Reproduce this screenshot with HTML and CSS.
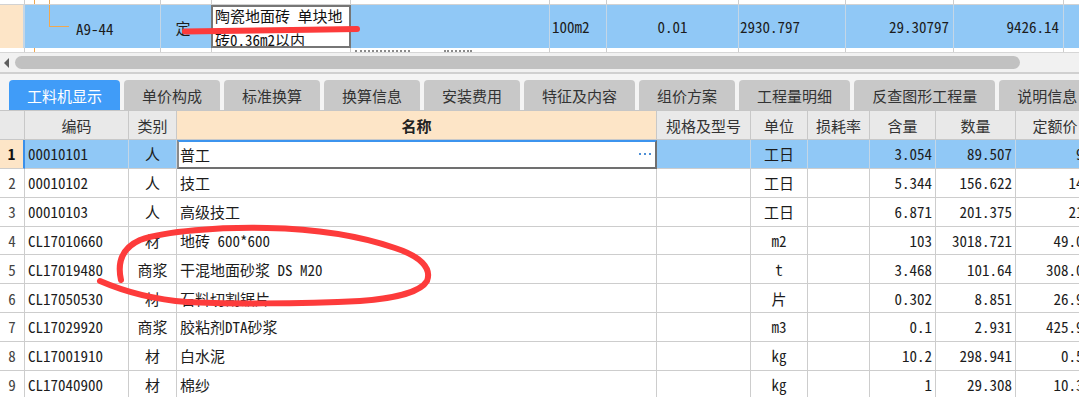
FILE: index.html
```html
<!DOCTYPE html>
<html lang="zh-CN">
<head>
<meta charset="utf-8">
<title>工料机显示</title>
<link rel="stylesheet" href="styles.css">
</head>
<body>
<div class="top">
  <div class="trow pt">
    <div class="tc c0"></div><div class="tc c1 tree-up"></div><div class="tc"></div><div class="tc"></div><div class="tc"></div><div class="tc"></div><div class="tc"></div><div class="tc"></div><div class="tc"></div><div class="tc"></div><div class="tc"></div>
  </div>
  <div class="trow sel">
    <div class="tc c0"></div>
    <div class="tc c1">A9-44</div>
    <div class="tc c2">定</div>
    <div class="tc c3"><div class="editbox"><span class="etext">陶瓷地面砖 单块地<br>砖0.36m2以内</span></div></div>
    <div class="tc c4"></div>
    <div class="tc c5">100m2</div>
    <div class="tc c6">0.01</div>
    <div class="tc c7">2930.797</div>
    <div class="tc c8">29.30797</div>
    <div class="tc c9">9426.14</div>
    <div class="tc c10"></div>
  </div>
  <div class="trow pb">
    <div class="tc c0"></div><div class="tc c1 tree-down"></div><div class="tc"></div><div class="tc"></div><div class="tc frag"><span class="dots d1"></span><span class="dots d2"></span></div><div class="tc"></div><div class="tc"></div><div class="tc"></div><div class="tc"></div><div class="tc"></div><div class="tc"></div>
  </div>
</div>

<div class="hscroll"><span class="arrow"></span><span class="thumb"></span></div>

<div class="tabbar">
  <div class="tab active">工料机显示</div>
  <div class="tab">单价构成</div>
  <div class="tab">标准换算</div>
  <div class="tab">换算信息</div>
  <div class="tab">安装费用</div>
  <div class="tab">特征及内容</div>
  <div class="tab">组价方案</div>
  <div class="tab">工程量明细</div>
  <div class="tab">反查图形工程量</div>
  <div class="tab">说明信息</div>
</div>

<div class="grid">
  <div class="row head">
    <div class="cell"></div>
    <div class="cell">编码</div>
    <div class="cell">类别</div>
    <div class="cell name">名称</div>
    <div class="cell">规格及型号</div>
    <div class="cell">单位</div>
    <div class="cell">损耗率</div>
    <div class="cell">含量</div>
    <div class="cell">数量</div>
    <div class="cell">定额价</div>
  </div>
  <div class="row r1">
    <div class="cell num">1</div>
    <div class="cell">00010101</div>
    <div class="cell ctr">人</div>
    <div class="cell edit"><span>普工</span><span class="more"><i></i><i></i><i></i></span></div>
    <div class="cell"></div>
    <div class="cell ctr">工日</div>
    <div class="cell"></div>
    <div class="cell rt">3.054</div>
    <div class="cell rt">89.507</div>
    <div class="cell rt">92</div>
  </div>
  <div class="row">
    <div class="cell num">2</div>
    <div class="cell">00010102</div>
    <div class="cell ctr">人</div>
    <div class="cell">技工</div>
    <div class="cell"></div>
    <div class="cell ctr">工日</div>
    <div class="cell"></div>
    <div class="cell rt">5.344</div>
    <div class="cell rt">156.622</div>
    <div class="cell rt">142</div>
  </div>
  <div class="row">
    <div class="cell num">3</div>
    <div class="cell">00010103</div>
    <div class="cell ctr">人</div>
    <div class="cell">高级技工</div>
    <div class="cell"></div>
    <div class="cell ctr">工日</div>
    <div class="cell"></div>
    <div class="cell rt">6.871</div>
    <div class="cell rt">201.375</div>
    <div class="cell rt">212</div>
  </div>
  <div class="row">
    <div class="cell num">4</div>
    <div class="cell">CL17010660</div>
    <div class="cell ctr">材</div>
    <div class="cell">地砖 600*600</div>
    <div class="cell"></div>
    <div class="cell ctr">m2</div>
    <div class="cell"></div>
    <div class="cell rt">103</div>
    <div class="cell rt">3018.721</div>
    <div class="cell rt">49.05</div>
  </div>
  <div class="row">
    <div class="cell num">5</div>
    <div class="cell">CL17019480</div>
    <div class="cell ctr">商浆</div>
    <div class="cell">干混地面砂浆 DS M20</div>
    <div class="cell"></div>
    <div class="cell ctr">t</div>
    <div class="cell"></div>
    <div class="cell rt">3.468</div>
    <div class="cell rt">101.64</div>
    <div class="cell rt">308.03</div>
  </div>
  <div class="row">
    <div class="cell num">6</div>
    <div class="cell">CL17050530</div>
    <div class="cell ctr">材</div>
    <div class="cell">石料切割锯片</div>
    <div class="cell"></div>
    <div class="cell ctr">片</div>
    <div class="cell"></div>
    <div class="cell rt">0.302</div>
    <div class="cell rt">8.851</div>
    <div class="cell rt">26.97</div>
  </div>
  <div class="row">
    <div class="cell num">7</div>
    <div class="cell">CL17029920</div>
    <div class="cell ctr">商浆</div>
    <div class="cell">胶粘剂DTA砂浆</div>
    <div class="cell"></div>
    <div class="cell ctr">m3</div>
    <div class="cell"></div>
    <div class="cell rt">0.1</div>
    <div class="cell rt">2.931</div>
    <div class="cell rt">425.93</div>
  </div>
  <div class="row">
    <div class="cell num">8</div>
    <div class="cell">CL17001910</div>
    <div class="cell ctr">材</div>
    <div class="cell">白水泥</div>
    <div class="cell"></div>
    <div class="cell ctr">kg</div>
    <div class="cell"></div>
    <div class="cell rt">10.2</div>
    <div class="cell rt">298.941</div>
    <div class="cell rt">0.59</div>
  </div>
  <div class="row">
    <div class="cell num">9</div>
    <div class="cell">CL17040900</div>
    <div class="cell ctr">材</div>
    <div class="cell">棉纱</div>
    <div class="cell"></div>
    <div class="cell ctr">kg</div>
    <div class="cell"></div>
    <div class="cell rt">1</div>
    <div class="cell rt">29.308</div>
    <div class="cell rt">10.32</div>
  </div>
</div>

<svg class="ink" width="1079" height="397" viewBox="0 0 1079 397" aria-hidden="true">
  <path d="M185 31.5 C 240 30.5, 300 30, 357 29"/>
  <path d="M121 280 C 117 262, 122 248, 140 240 C 165 231, 220 227, 267 228 C 320 229, 360 236, 395 248 C 420 256, 432 268, 427 281 C 420 293, 390 299, 360 301 C 300 304, 220 304, 187 302 C 160 300, 130 294, 100 281"/>
</svg>
</body>
</html>
```

FILE: styles.css
```css
* { box-sizing: border-box; }
html, body { margin: 0; padding: 0; }
body {
  width: 1079px;
  height: 397px;
  overflow: hidden;
  position: relative;
  background: #fff;
  color: #1c1c1c;
  font-family: "Noto Sans Mono CJK SC", "Noto Sans CJK SC", monospace;
  font-size: 15px;
  line-height: 1;
}

/* ---------- top (upper grid, partially visible) ---------- */
.top { height: 53px; overflow: hidden; }
.trow {
  display: grid;
  grid-template-columns: 25px 136px 51px 139px 199px 57px 132px 107px 108px 110px 60px;
}
.tc {
  border-right: 1px solid #cdcdcd;
  display: flex;
  align-items: center;
  white-space: nowrap;
  overflow: hidden;
}
.trow.pt { height: 5px; border-bottom: 1px solid #d2d2d2; }
.trow.pb { height: 5px; border-bottom: 1px solid #d6d6d6; }
.trow.sel { height: 43px; background: #90c8f6; }
.trow.sel .tc { border-right-color: #c4d6e6; }

.tree-up {
  background:
    linear-gradient(#f0a850, #f0a850) 9px 0 / 1px 100% no-repeat,
    linear-gradient(#f0a850, #f0a850) 24px 0 / 1px 100% no-repeat;
}
.tree-down {
  background: linear-gradient(#f0a850, #f0a850) 9px 0 / 1px 100% no-repeat;
}
.sel .c0 { background: #fde5c7; border-right: 2px solid #3b8fe9; }
.sel .c1 {
  padding-left: 51px;
  padding-top: 3px;
  background:
    linear-gradient(#f0a850, #f0a850) 24px 0 / 1px 22px no-repeat,
    linear-gradient(#f0a850, #f0a850) 24px 21px / 20px 1px no-repeat;
}
.sel .c2 { justify-content: center; padding-right: 6px; padding-top: 1px; }
.sel .c3 { border-right: none; align-items: stretch; overflow: visible; }
.editbox {
  margin-left: -1px;
  width: 140px;
  height: 43px;
  border: 2px solid #767676;
  background: #fff;
  padding: 0 0 0 2px;
  color: #111;
  overflow: hidden;
  white-space: nowrap;
}
.etext {
  display: block;
  margin-top: -3px;
  line-height: 24px;
}
.sel .c5 { padding-left: 2px; }
.sel .c6 { justify-content: center; }
.sel .c7 { padding-left: 1px; }
.sel .c8, .sel .c9 { justify-content: flex-end; padding-right: 4px; }

.frag { align-items: flex-start; padding-left: 4px; gap: 34px; }
.dots { display: block; height: 2px; border-top: 2px dotted #8a8a8a; margin-top: 2px; }
.d1 { width: 55px; }
.d2 { width: 28px; }

/* ---------- horizontal scrollbar ---------- */
.hscroll {
  height: 19px;
  background: #f1f1f1;
  display: flex;
  align-items: center;
  padding-left: 4px;
  gap: 6px;
}
.arrow {
  width: 0; height: 0;
  border-top: 5px solid transparent;
  border-bottom: 5px solid transparent;
  border-right: 5px solid #5e5e5e;
}
.thumb {
  flex: 0 0 1005px;
  height: 13px;
  border-radius: 7px;
  background: #c1c1c1;
}

/* ---------- tabs ---------- */
.tabbar {
  height: 38px;
  border-top: 2px solid #d0d0d0;
  background: #f4f4f4;
  display: flex;
  gap: 4px;
  padding: 6px 0 0 9px;
  overflow: hidden;
}
.tab {
  flex-shrink: 0;
  padding: 0 18px;
  background: #c8c8c8;
  border-radius: 4px 4px 0 0;
  font-family: "Noto Sans CJK SC", sans-serif;
  font-size: 15px;
  color: #333;
  display: flex;
  align-items: center;
  white-space: nowrap;
}
.tab.active { background: #409cf8; color: #fff; }

/* ---------- material grid ---------- */
.grid { border-top: 1px solid #c6c6c6; }
.row {
  display: grid;
  grid-template-columns: 25px 104px 48px 480px 94px 57px 62px 66px 80px 79px;
  height: 28.85px;
}
.cell {
  border-right: 1px solid #cdcdcd;
  border-bottom: 1px solid #cdcdcd;
  display: flex;
  align-items: center;
  white-space: nowrap;
  overflow: hidden;
  padding: 0 3px;
}
.row.head { height: 29px; }
.head .cell {
  background: #e9e9e9;
  justify-content: center;
  color: #333;
  border-color: #c8c8c8;
  font-family: "Noto Sans CJK SC", sans-serif;
}
.head .name { background: #fde5c7; font-weight: bold; color: #222; }

.num { justify-content: center; color: #444; padding: 0; }
.ctr { justify-content: center; }
.rt { justify-content: flex-end; }

.r1 .cell { background: #90c8f6; border-right-color: #c4d6e6; }
.r1 .num { background: #fde5c7; border-right: 2px solid #3b8fe9; font-weight: bold; color: #111; }
.r1 .edit {
  background: #fff;
  border: 2px solid #707070;
  border-top-color: #3c94ee;
  border-left-color: #8a8a8a;
  padding: 0 4px 0 1px;
  justify-content: space-between;
}
.more { display: flex; gap: 3px; }
.more i { display: block; width: 2px; height: 2px; background: #4d8fd6; }

/* ---------- red hand-drawn annotations ---------- */
.ink {
  position: absolute;
  top: 0;
  left: 0;
  pointer-events: none;
}
.ink path {
  fill: none;
  stroke: #fd3b3b;
  stroke-width: 6;
  stroke-linecap: round;
  stroke-linejoin: round;
}
```
